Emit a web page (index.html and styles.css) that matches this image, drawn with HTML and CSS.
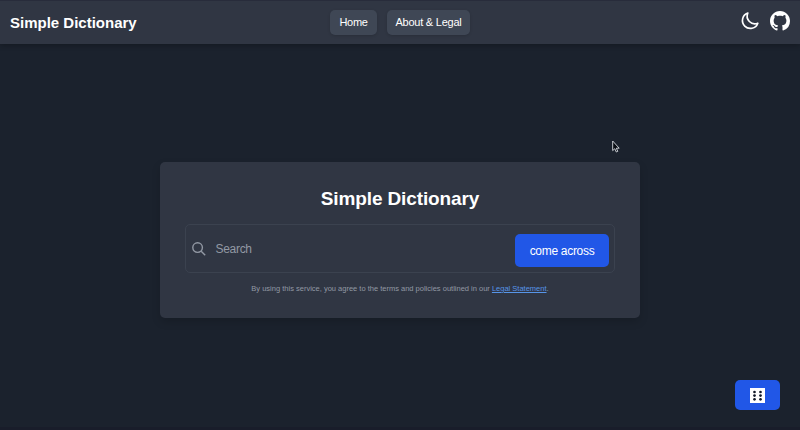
FILE: index.html
```html
<!DOCTYPE html>
<html lang="en">
<head>
<meta charset="utf-8">
<title>Simple Dictionary</title>
<link rel="stylesheet" href="styles.css">
</head>
<body>
<header class="navbar">
  <div class="brand">Simple Dictionary</div>
  <nav class="links">
    <a class="nav-link">Home</a>
    <a class="nav-link nav-link-wide">About &amp; Legal</a>
  </nav>
  <div class="tools">
    <svg class="moon" viewBox="0 0 24 24" fill="none" stroke="currentColor" stroke-width="2" stroke-linecap="round" stroke-linejoin="round"><path d="M21.4 14.6A9.2 9.2 0 019.4 2.4 9.5 9.5 0 1021.4 14.6z"/></svg>
    <svg class="github" viewBox="0 0 16 16" fill="currentColor"><path d="M8 0C3.58 0 0 3.58 0 8c0 3.54 2.29 6.53 5.47 7.59.4.07.55-.17.55-.38 0-.19-.01-.82-.01-1.49-2.01.37-2.53-.49-2.69-.94-.09-.23-.48-.94-.82-1.13-.28-.15-.68-.52-.01-.53.63-.01 1.08.58 1.23.82.72 1.21 1.87.87 2.33.66.07-.52.28-.87.51-1.07-1.78-.2-3.64-.89-3.64-3.95 0-.87.31-1.59.82-2.15-.08-.2-.36-1.02.08-2.12 0 0 .67-.21 2.2.82.64-.18 1.32-.27 2-.27s1.36.09 2 .27c1.53-1.04 2.2-.82 2.2-.82.44 1.1.16 1.92.08 2.12.51.56.82 1.27.82 2.15 0 3.07-1.87 3.75-3.65 3.95.29.25.54.73.54 1.48 0 1.07-.01 1.93-.01 2.2 0 .21.15.46.55.38A8.01 8.01 0 0016 8c0-4.42-3.58-8-8-8z"/></svg>
  </div>
</header>
<main class="page">
  <section class="card">
    <h1 class="title">Simple Dictionary</h1>
    <form class="search">
      <svg class="search-icon" viewBox="0 0 14 14" fill="none" stroke="currentColor" stroke-width="1.4"><circle cx="5.6" cy="5.6" r="4.8"/><path d="M9.2 9.2l4 4"/></svg>
      <span class="placeholder">Search</span>
      <button class="submit" type="button">come across</button>
    </form>
    <p class="terms">By using this service, you agree to the terms and policies outlined in our <a class="legal">Legal Statement</a>.</p>
  </section>
</main>
<button class="random" type="button">
  <svg class="die" viewBox="0 0 15 15"><rect width="15" height="15" fill="#fff"/><g fill="#111827"><circle cx="4.5" cy="4" r="1.35"/><circle cx="10.5" cy="4" r="1.35"/><circle cx="4.5" cy="7.6" r="1.35"/><circle cx="10.5" cy="7.6" r="1.35"/><circle cx="4.5" cy="11.3" r="1.35"/><circle cx="10.5" cy="11.3" r="1.35"/></g></svg>
</button>
<svg class="pointer" viewBox="0 0 8 13"><path d="M.7 1v9.6l2.1-1.9 1.5 3.3 1.5-.7-1.5-3.1h2.9z" fill="#080c12" stroke="#d8dce2" stroke-width=".9"/></svg>
</body>
</html>
```
FILE: styles.css
```css
* { box-sizing: border-box; }
body {
  margin: 0;
  height: 430px;
  overflow: hidden;
  display: flex;
  flex-direction: column;
  background: #1b222d;
  border-top: 1px solid #282c3b;
  border-bottom: 3px solid #191d2a;
  font-family: "Liberation Sans", Arial, sans-serif;
  color: #fff;
}
button { border: 0; font: inherit; color: inherit; }
.navbar {
  height: 43px;
  flex: none;
  display: grid;
  grid-template-columns: 1fr auto 1fr;
  align-items: center;
  padding: 0 10px;
  background: #303643;
  box-shadow: 0 2px 5px rgba(0, 0, 0, .22);
}
.brand { font-size: 15px; font-weight: 700; line-height: 20px; }
.links { display: flex; gap: 10px; }
.nav-link {
  width: 47px;
  height: 25px;
  border-radius: 5px;
  background: #3f4755;
  font-size: 11px;
  letter-spacing: -.3px;
  line-height: 25px;
  text-align: center;
  box-shadow: 0 1px 3px rgba(0, 0, 0, .15);
}
.nav-link-wide { width: 83px; letter-spacing: -.23px; }
.tools { display: flex; justify-content: flex-end; align-items: center; gap: 10px; margin-top: -4px; }
.moon { width: 20px; height: 20px; }
.github { width: 20px; height: 20px; }
.page { flex: 1; display: flex; justify-content: center; align-items: flex-start; padding-top: 118px; }
.card {
  width: 480px;
  height: 156px;
  padding: 26px 25px 25px;
  border-radius: 5px;
  background: #303643;
  box-shadow: 0 4px 8px rgba(0, 0, 0, .15);
}
.title { margin: 0 0 14px; font-size: 19px; letter-spacing: -.12px; line-height: 22px; text-align: center; }
.search {
  height: 49px;
  display: flex;
  align-items: center;
  padding: 0 5px 0 6px;
  border: 1px solid #3b424f;
  border-radius: 5px;
}
.search-icon { width: 14px; height: 14px; color: #9299a4; }
.placeholder { flex: 1; margin: 1px 0 0 9.5px; font-size: 12px; letter-spacing: -.3px; color: #9299a4; }
.submit {
  width: 94px;
  height: 33px;
  padding: 0;
  margin-top: 4px;
  border-radius: 5px;
  background: #2157e7;
  font-size: 12px;
  letter-spacing: -.3px;
}
.terms { margin: 11px 0 0; font-size: 7.5px; line-height: 10px; text-align: center; color: #9299a4; }
.legal { color: #5795e8; text-decoration: underline; }
.random {
  position: fixed;
  right: 20px;
  bottom: 20px;
  width: 45px;
  height: 30px;
  padding: 0;
  display: flex;
  align-items: center;
  justify-content: center;
  border-radius: 5px;
  background: #2157e7;
}
.die { width: 15px; height: 15px; }
.pointer { position: absolute; left: 612px; top: 140px; width: 8px; height: 13px; }
```
